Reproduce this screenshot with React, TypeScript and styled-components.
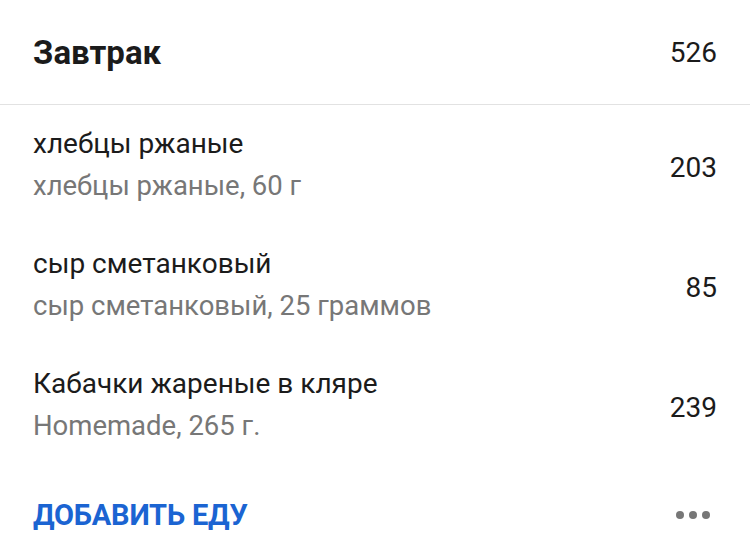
import React from "react"
import styled, { createGlobalStyle } from "styled-components"

const GlobalStyle = createGlobalStyle`
  html, body {
    margin: 0;
    padding: 0;
    background: #ffffff;
  }
  body {
    font-family: Roboto, "Noto Sans", "Liberation Sans", sans-serif;
    -webkit-font-smoothing: antialiased;
  }
`

const StyledCard = styled.div`
  width: 750px;
  height: 554px;
  background: #ffffff;
  display: flex;
  flex-direction: column;
`

const StyledHeader = styled.div`
  height: 105px;
  display: flex;
  align-items: center;
  justify-content: space-between;
  padding: 0 33px;
  border-bottom: 1px solid #e2e2e2;
  box-sizing: border-box;
`

const StyledTitle = styled.div`
  font-size: 33px;
  font-weight: 700;
  color: #1b1b1b;
`

const StyledTotal = styled.div`
  font-size: 28px;
  color: #1b1b1b;
`

const StyledRow = styled.div`
  display: flex;
  align-items: center;
  justify-content: space-between;
  padding: 24px 33px 24px;
`

const StyledInfo = styled.div`
  display: flex;
  flex-direction: column;
  gap: 12px;
`

const StyledName = styled.div`
  font-size: 28px;
  line-height: 30px;
  color: #1b1b1b;
`

const StyledDetail = styled.div`
  font-size: 27.5px;
  line-height: 30px;
  color: #777777;
`

const StyledCalories = styled.div`
  font-size: 28px;
  color: #1b1b1b;
  padding-top: 4px;
`

const StyledFooter = styled.div`
  display: flex;
  align-items: center;
  justify-content: space-between;
  padding: 36px 33px 0;
`

const StyledAdd = styled.div`
  font-size: 29px;
  line-height: 28px;
  font-weight: 700;
  color: #1b64d2;
  letter-spacing: -0.2px;
`

const StyledDots = styled.div`
  display: flex;
  gap: 5px;
  padding-right: 7px;
`

const StyledDot = styled.span`
  width: 8px;
  height: 8px;
  border-radius: 50%;
  background: #777777;
`

const items = [
  { name: "хлебцы ржаные", detail: "хлебцы ржаные, 60 г", kcal: 203 },
  { name: "сыр сметанковый", detail: "сыр сметанковый, 25 граммов", kcal: 85 },
  { name: "Кабачки жареные в кляре", detail: "Homemade, 265 г.", kcal: 239 },
]

const App = () => {
  return (
    <>
      <GlobalStyle />
      <StyledCard>
        <StyledHeader>
          <StyledTitle>Завтрак</StyledTitle>
          <StyledTotal>526</StyledTotal>
        </StyledHeader>
        {items.map(item => (
          <StyledRow key={item.name}>
            <StyledInfo>
              <StyledName>{item.name}</StyledName>
              <StyledDetail>{item.detail}</StyledDetail>
            </StyledInfo>
            <StyledCalories>{item.kcal}</StyledCalories>
          </StyledRow>
        ))}
        <StyledFooter>
          <StyledAdd>ДОБАВИТЬ ЕДУ</StyledAdd>
          <StyledDots>
            <StyledDot />
            <StyledDot />
            <StyledDot />
          </StyledDots>
        </StyledFooter>
      </StyledCard>
    </>
  )
}

export default App
